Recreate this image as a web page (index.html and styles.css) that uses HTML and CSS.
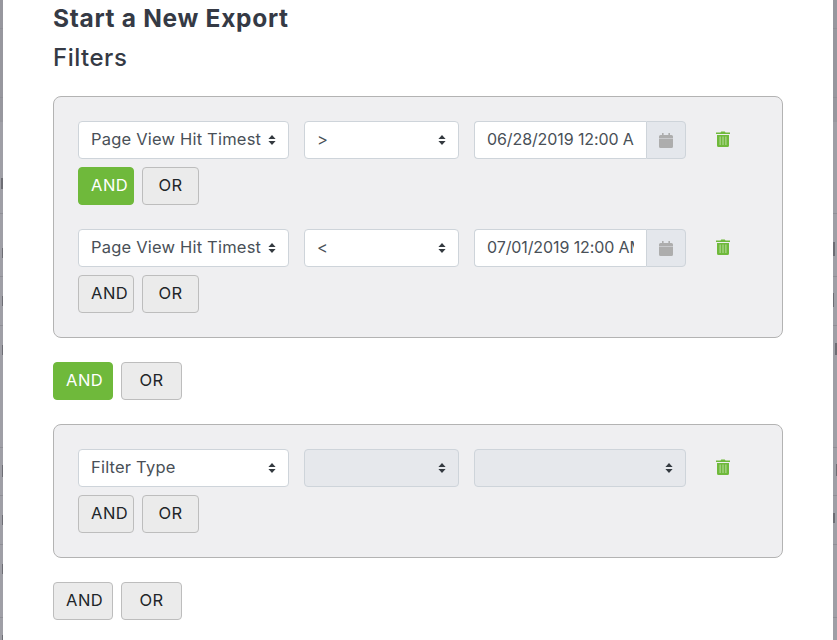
FILE: index.html
```html
<!DOCTYPE html>
<html lang="en">
<head>
<meta charset="utf-8">
<title>Start a New Export</title>
<link rel="stylesheet" href="styles.css">
</head>
<body>
<div class="backdrop">
  <i class="band"></i>
  <i class="rule r1"></i><i class="rule r2"></i><i class="rule r3"></i><i class="rule r4"></i>
  <i class="rule r5"></i><i class="rule r6"></i><i class="rule r7"></i><i class="rule r8"></i><i class="rule r9"></i>
  <i class="mark l1"></i><i class="mark l2"></i><i class="mark l3"></i><i class="mark l4"></i>
  <i class="mark l5"></i><i class="mark l6"></i><i class="mark l7"></i><i class="mark l8"></i>
  <i class="mark d1"></i><i class="mark d2"></i><i class="mark d3"></i><i class="mark d4"></i><i class="mark d5"></i>
</div>
<main class="modal">
  <h1 class="title">Start a New Export</h1>
  <h2 class="subtitle">Filters</h2>

  <section class="group">
    <div class="filter">
      <div class="fields">
        <div class="select wide">
          <select><option>Page View Hit Timestamp</option></select>
          <svg class="caret" viewBox="0 0 8 10"><path d="M4 0l3.600 4H.4zM4 10L.4 6h7.200z"/></svg>
        </div>
        <div class="select mid">
          <select><option>&gt;</option></select>
          <svg class="caret" viewBox="0 0 8 10"><path d="M4 0l3.600 4H.4zM4 10L.4 6h7.200z"/></svg>
        </div>
        <div class="date">
          <input type="text" value="06/28/2019 12:00 AM">
          <span class="addon"><svg class="cal" viewBox="0 0 14 15"><path d="M3 0h1.600v2h4.800V0H11v2h1.500A1.500 1.500 0 0 1 14 3.500V5H0V3.500A1.500 1.500 0 0 1 1.500 2H3zM0 5.500h14v8a1.500 1.500 0 0 1-1.500 1.500h-11A1.500 1.500 0 0 1 0 13.500z"/></svg></span>
        </div>
        <svg class="trash" viewBox="0 0 14 16"><path d="M0 1.600h4.500L5.200.4h3.600l.7 1.200H14v1.400H0zM1 4h12v10.500a1.500 1.500 0 0 1-1.500 1.500h-9A1.500 1.500 0 0 1 1 14.500z"/><path class="slot" d="M3.500 5.500h1.300v8.500H3.500zM6.350 5.500h1.300v8.500h-1.300zM9.200 5.500h1.300v8.500H9.200z"/></svg>
      </div>
      <div class="btns"><button class="btn on">AND</button><button class="btn">OR</button></div>
    </div>
    <div class="filter">
      <div class="fields">
        <div class="select wide">
          <select><option>Page View Hit Timestamp</option></select>
          <svg class="caret" viewBox="0 0 8 10"><path d="M4 0l3.600 4H.4zM4 10L.4 6h7.200z"/></svg>
        </div>
        <div class="select mid">
          <select><option>&lt;</option></select>
          <svg class="caret" viewBox="0 0 8 10"><path d="M4 0l3.600 4H.4zM4 10L.4 6h7.200z"/></svg>
        </div>
        <div class="date">
          <input type="text" value="07/01/2019 12:00 AM">
          <span class="addon"><svg class="cal" viewBox="0 0 14 15"><path d="M3 0h1.600v2h4.800V0H11v2h1.500A1.500 1.500 0 0 1 14 3.500V5H0V3.500A1.500 1.500 0 0 1 1.500 2H3zM0 5.500h14v8a1.500 1.500 0 0 1-1.500 1.500h-11A1.500 1.500 0 0 1 0 13.500z"/></svg></span>
        </div>
        <svg class="trash" viewBox="0 0 14 16"><path d="M0 1.600h4.500L5.200.4h3.600l.7 1.200H14v1.400H0zM1 4h12v10.500a1.500 1.500 0 0 1-1.500 1.500h-9A1.500 1.500 0 0 1 1 14.500z"/><path class="slot" d="M3.500 5.500h1.300v8.500H3.500zM6.350 5.500h1.300v8.500h-1.300zM9.200 5.500h1.300v8.500H9.200z"/></svg>
      </div>
      <div class="btns"><button class="btn">AND</button><button class="btn">OR</button></div>
    </div>
  </section>

  <div class="btns outer"><button class="btn on">AND</button><button class="btn">OR</button></div>

  <section class="group">
    <div class="filter">
      <div class="fields">
        <div class="select wide">
          <select><option>Filter Type</option></select>
          <svg class="caret" viewBox="0 0 8 10"><path d="M4 0l3.600 4H.4zM4 10L.4 6h7.200z"/></svg>
        </div>
        <div class="select mid off">
          <select disabled><option></option></select>
          <svg class="caret" viewBox="0 0 8 10"><path d="M4 0l3.600 4H.4zM4 10L.4 6h7.200z"/></svg>
        </div>
        <div class="select end off">
          <select disabled><option></option></select>
          <svg class="caret" viewBox="0 0 8 10"><path d="M4 0l3.600 4H.4zM4 10L.4 6h7.200z"/></svg>
        </div>
        <svg class="trash" viewBox="0 0 14 16"><path d="M0 1.600h4.500L5.200.4h3.600l.7 1.200H14v1.400H0zM1 4h12v10.500a1.500 1.500 0 0 1-1.500 1.500h-9A1.500 1.500 0 0 1 1 14.500z"/><path class="slot" d="M3.500 5.500h1.300v8.500H3.500zM6.350 5.500h1.300v8.500h-1.300zM9.200 5.500h1.300v8.500H9.200z"/></svg>
      </div>
      <div class="btns"><button class="btn">AND</button><button class="btn">OR</button></div>
    </div>
  </section>

  <div class="btns outer"><button class="btn">AND</button><button class="btn">OR</button></div>
</main>
</body>
</html>
```
FILE: styles.css
```css
* { box-sizing: border-box; }
html, body { margin: 0; height: 100%; overflow: hidden; }
body {
  display: flex;
  padding: 0 4px 0 3px;
  background: #9f9fa6;
  font-family: Inter, "Noto Sans", sans-serif;
  color: #353a45;
}
.backdrop { position: absolute; inset: 0; pointer-events: none; }
.band { position: absolute; left: 0; right: 0; top: 0; height: 122px; background: #97979e; }
.rule { position: absolute; left: 0; right: 0; height: 1px; background: #8f8f96; }
.r1 { top: 28px; } .r2 { top: 213px; } .r3 { top: 276px; } .r4 { top: 325px; }
.r5 { top: 447px; } .r6 { top: 495px; } .r7 { top: 544px; } .r8 { top: 617px; } .r9 { top: 97px; }
.mark { position: absolute; width: 1px; background: #6d6d74; }
.l1 { left: 1px; top: 178px; height: 11px; width: 2px; }
.l2 { left: 2px; top: 248px; height: 10px; }
.l3 { left: 2px; top: 296px; height: 10px; }
.l4 { left: 2px; top: 345px; height: 10px; }
.l5 { left: 2px; top: 465px; height: 12px; }
.l6 { left: 2px; top: 515px; height: 10px; }
.l7 { left: 2px; top: 564px; height: 10px; }
.l8 { left: 2px; top: 635px; height: 5px; }
.d1 { left: 833px; top: 242px; height: 14px; width: 2px; }
.d2 { left: 833px; top: 293px; height: 14px; }
.d3 { left: 835px; top: 343px; height: 12px; width: 2px; }
.d4 { left: 836px; top: 464px; height: 12px; }
.d5 { left: 833px; top: 513px; height: 10px; width: 2px; }
.modal {
  position: relative;
  width: 830px;
  height: 640px;
  background: #fff;
  padding: 4px 50px 0;
}
.title { margin: 0; font-size: 24.500px; line-height: 28px; font-weight: 700; letter-spacing: .7px; }
.subtitle { margin: 10px 0 0; font-size: 24px; line-height: 32px; font-weight: 500; letter-spacing: .5px; }
.group {
  margin-top: 22px;
  width: 730px;
  padding: 24px;
  background: #efeff1;
  border: 1px solid #b3b3b3;
  border-radius: 8px;
  display: flex;
  flex-direction: column;
  gap: 24px;
}
.outer + .group { margin-top: 24px; }
.fields { display: flex; align-items: center; gap: 15px; }
.select, .date { position: relative; height: 38px; }
.wide { width: 211px; }
.mid { width: 155px; }
.end, .date { width: 212px; }
.select select {
  appearance: none;
  width: 100%;
  height: 100%;
  padding: 0 27px 2px 12px;
  border: 1px solid #ced4da;
  border-radius: 4px;
  background: #fff;
  font: 400 16.500px Inter, "Noto Sans", sans-serif;
  letter-spacing: .2px;
  color: #495057;
}
.off select { background: #e6e8ec; opacity: 1; }
.caret { position: absolute; right: 13px; top: 14px; width: 8px; height: 10px; fill: #343a40; }
.date { display: flex; }
.date input {
  flex: 1;
  min-width: 0;
  padding: 0 12px 2px;
  border: 1px solid #ced4da;
  border-right: 0;
  border-radius: 4px 0 0 4px;
  background: #fff;
  font: 400 16px Inter, "Noto Sans", sans-serif;
  letter-spacing: -.1px;
  color: #495057;
}
.addon {
  width: 40px;
  display: flex;
  align-items: center;
  justify-content: center;
  background: #e4e7ec;
  border: 1px solid #ced4da;
  border-radius: 0 4px 4px 0;
}
.cal { width: 14px; height: 15px; fill: #adadad; }
.trash { width: 14px; height: 16px; margin: 0 0 2px 15px; fill: #6fb93b; }
.slot { fill: #a9d58a; }
.btns { display: flex; gap: 8px; margin-top: 8px; }
.btn {
  height: 38px;
  width: 56px;
  padding: 0 12px 2px;
  border: 1px solid #bdbdbd;
  border-radius: 4px;
  background: #ebebeb;
  font: 400 16.500px Inter, "Noto Sans", sans-serif;
  letter-spacing: .5px;
  color: #212529;
}
.btn.on { background: #6fb93b; border-color: #6fb93b; color: #fff; }
.filter .btn + .btn { width: 57px; }
.outer { margin-top: 24px; }
.outer .btn { width: 60px; }
.outer .btn + .btn { width: 61px; }
```
